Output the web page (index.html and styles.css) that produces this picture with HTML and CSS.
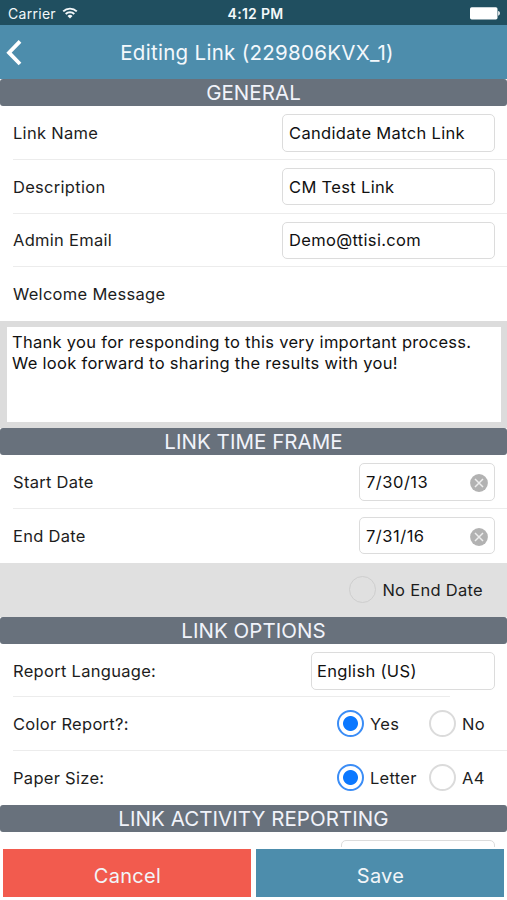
FILE: index.html
```html
<!DOCTYPE html>
<html lang="en">
<head>
<meta charset="utf-8">
<title>Editing Link</title>
<link rel="stylesheet" href="styles.css">
</head>
<body>
<div class="app">
  <div class="status">
    <div class="carrier"><span>Carrier</span>
      <svg class="wifi" width="16" height="12" viewBox="0 0 16 12" fill="none" stroke="#f3f8fa" stroke-width="1.9"><path d="M1.2 4.4a9.7 9.7 0 0 1 13.6 0M3.7 7a6.1 6.1 0 0 1 8.6 0"/><path d="M8 11.6 5.5 9.1a3.5 3.5 0 0 1 5 0Z" fill="#f3f8fa" stroke="none"/></svg>
    </div>
    <span class="time">4:12 PM</span>
    <svg class="battery" width="31" height="13" viewBox="0 0 31 13" fill="#fff"><rect x="0" y="0.3" width="27.5" height="12.2" rx="1.7"/><path d="M28.2 4.1c2.2.5 2.2 4.1 0 4.6Z"/></svg>
  </div>
  <header class="nav">
    <svg class="back" width="22" height="28" viewBox="0 0 22 28" fill="none" stroke="#fff" stroke-width="3.8"><path d="M20 3.4 9 14.7l11 11.3"/></svg>
    <h1 class="title">Editing Link (229806KVX_1)</h1>
  </header>
  <main class="form">
    <h2 class="section">GENERAL</h2>
    <div class="row"><span class="label">Link Name</span><div class="field wide"><span>Candidate Match Link</span></div></div>
    <div class="row"><span class="label">Description</span><div class="field wide"><span>CM Test Link</span></div></div>
    <div class="row"><span class="label">Admin Email</span><div class="field wide"><span>Demo@ttisi.com</span></div></div>
    <div class="row last"><span class="label">Welcome Message</span></div>
    <div class="message"><div class="message-text">Thank you for responding to this very important process.<br>We look forward to sharing the results with you!</div></div>
    <h2 class="section">LINK TIME FRAME</h2>
    <div class="row"><span class="label">Start Date</span><div class="field date"><span>7/30/13</span><svg class="clear" width="18" height="18" viewBox="0 0 18 18"><circle cx="9" cy="9" r="8.9" fill="#b2b2b2"/><path d="m5 5 8 8M13 5l-8 8" stroke="#eee" stroke-width="1.5"/></svg></div></div>
    <div class="row last"><span class="label">End Date</span><div class="field date"><span>7/31/16</span><svg class="clear" width="18" height="18" viewBox="0 0 18 18"><circle cx="9" cy="9" r="8.9" fill="#b2b2b2"/><path d="m5 5 8 8M13 5l-8 8" stroke="#eee" stroke-width="1.5"/></svg></div></div>
    <div class="no-end"><i class="radio"></i><span>No End Date</span></div>
    <h2 class="section">LINK OPTIONS</h2>
    <div class="row short"><span class="label">Report Language:</span><div class="field language"><span>English (US)</span></div></div>
    <div class="row"><span class="label">Color Report?:</span><div class="choices"><div class="choice"><i class="radio on"></i><span>Yes</span></div><div class="choice"><i class="radio"></i><span>No</span></div></div></div>
    <div class="row last"><span class="label">Paper Size:</span><div class="choices"><div class="choice"><i class="radio on"></i><span>Letter</span></div><div class="choice"><i class="radio"></i><span>A4</span></div></div></div>
    <h2 class="section">LINK ACTIVITY REPORTING</h2>
    <div class="row last"><div class="field activity"></div></div>
  </main>
  <footer class="actions">
    <div class="button cancel">Cancel</div>
    <div class="button save">Save</div>
  </footer>
</div>
</body>
</html>
```

FILE: styles.css
```css
* { box-sizing: border-box; }
body { margin: 0; background: #fff; color: #1d1d1d; font-family: Inter, "Liberation Sans", sans-serif; font-size: 16.5px; line-height: 21px; letter-spacing: 0.29px; }
.app { width: 507px; height: 900px; display: flex; flex-direction: column; overflow: hidden; }
.status { height: 25px; flex: none; display: grid; grid-template-columns: 1fr auto 1fr; align-items: center; padding: 2px 6px 0 8px; background: #204f60; color: #f3f8fa; font-size: 14px; }
.carrier { display: flex; align-items: center; gap: 6px; }
.wifi { margin-top: -2px; }
.time { padding-left: 2px; font-weight: 600; font-size: 14px; }
.battery { justify-self: end; }
.nav { height: 54px; flex: none; display: flex; align-items: center; background: #4d8dac; color: #f3f8fc; }
.back { flex: none; }
.title { flex: 1; margin: 0 20px 0 0; padding: 2px 0 0 5px; text-align: center; font-size: 20.5px; font-weight: 400; line-height: 24px; }
.form { flex: 1; min-height: 0; overflow: hidden; }
.section { height: 27px; margin: 0; border-radius: 3px; background: #68717c; color: #f1f3fa; text-align: center; font-size: 20.5px; font-weight: 400; line-height: 28px; letter-spacing: 0.05px; }
.row { height: 53.75px; display: flex; align-items: center; justify-content: space-between; padding-right: 12px; margin-left: 13px; border-bottom: 1px solid #ececec; }
.row.last { border-bottom-color: transparent; }
.row.short { border-bottom: 0; background: linear-gradient(#ececec, #ececec) left bottom / 437px 1px no-repeat; }
.label { padding-top: 2px; white-space: nowrap; }
.field { height: 37.5px; flex: none; display: flex; align-items: center; justify-content: space-between; margin-top: 1px; padding: 1px 6px 0; border: 1px solid #dcdcdc; border-radius: 5px; color: #111; letter-spacing: 0.33px; white-space: nowrap; }
.wide { width: 213px; }
.date { width: 136px; letter-spacing: 0.5px; }
.language { width: 184px; padding-left: 5px; }
.activity { width: 154px; margin-left: auto; }
.clear { margin-top: 1px; }
.message { height: 107px; padding: 6px; padding-left: 7px; background: #dcdcdc; }
.message-text { height: 95px; padding: 5px; background: #fff; color: #111; white-space: nowrap; }
.no-end { height: 54px; display: flex; align-items: center; justify-content: flex-end; gap: 6px; padding-right: 24px; background: #e0e0e0; }
.no-end span, .choice span { padding-top: 2px; }
.radio { width: 27px; height: 27px; flex: none; border: 2px solid #dbdbdb; border-radius: 50%; }
.no-end .radio { border: 1px solid #cecece; }
.radio.on { border-color: #3b8df6; background: radial-gradient(circle, #0b78ff 7px, transparent 7.9px); }
.choices { width: 158px; display: grid; grid-template-columns: 92px 1fr; }
.choice { display: flex; align-items: center; gap: 6px; }
.actions { height: 53px; flex: none; display: flex; gap: 5px; padding: 2px 3px 3px; background: #fff; }
.button { flex: 1; padding: 7px 0 0 1px; color: #f1f5f8; font-size: 20px; display: flex; align-items: center; justify-content: center; }
.cancel { background: #f25b4e; }
.save { background: #4d8dac; }
```
